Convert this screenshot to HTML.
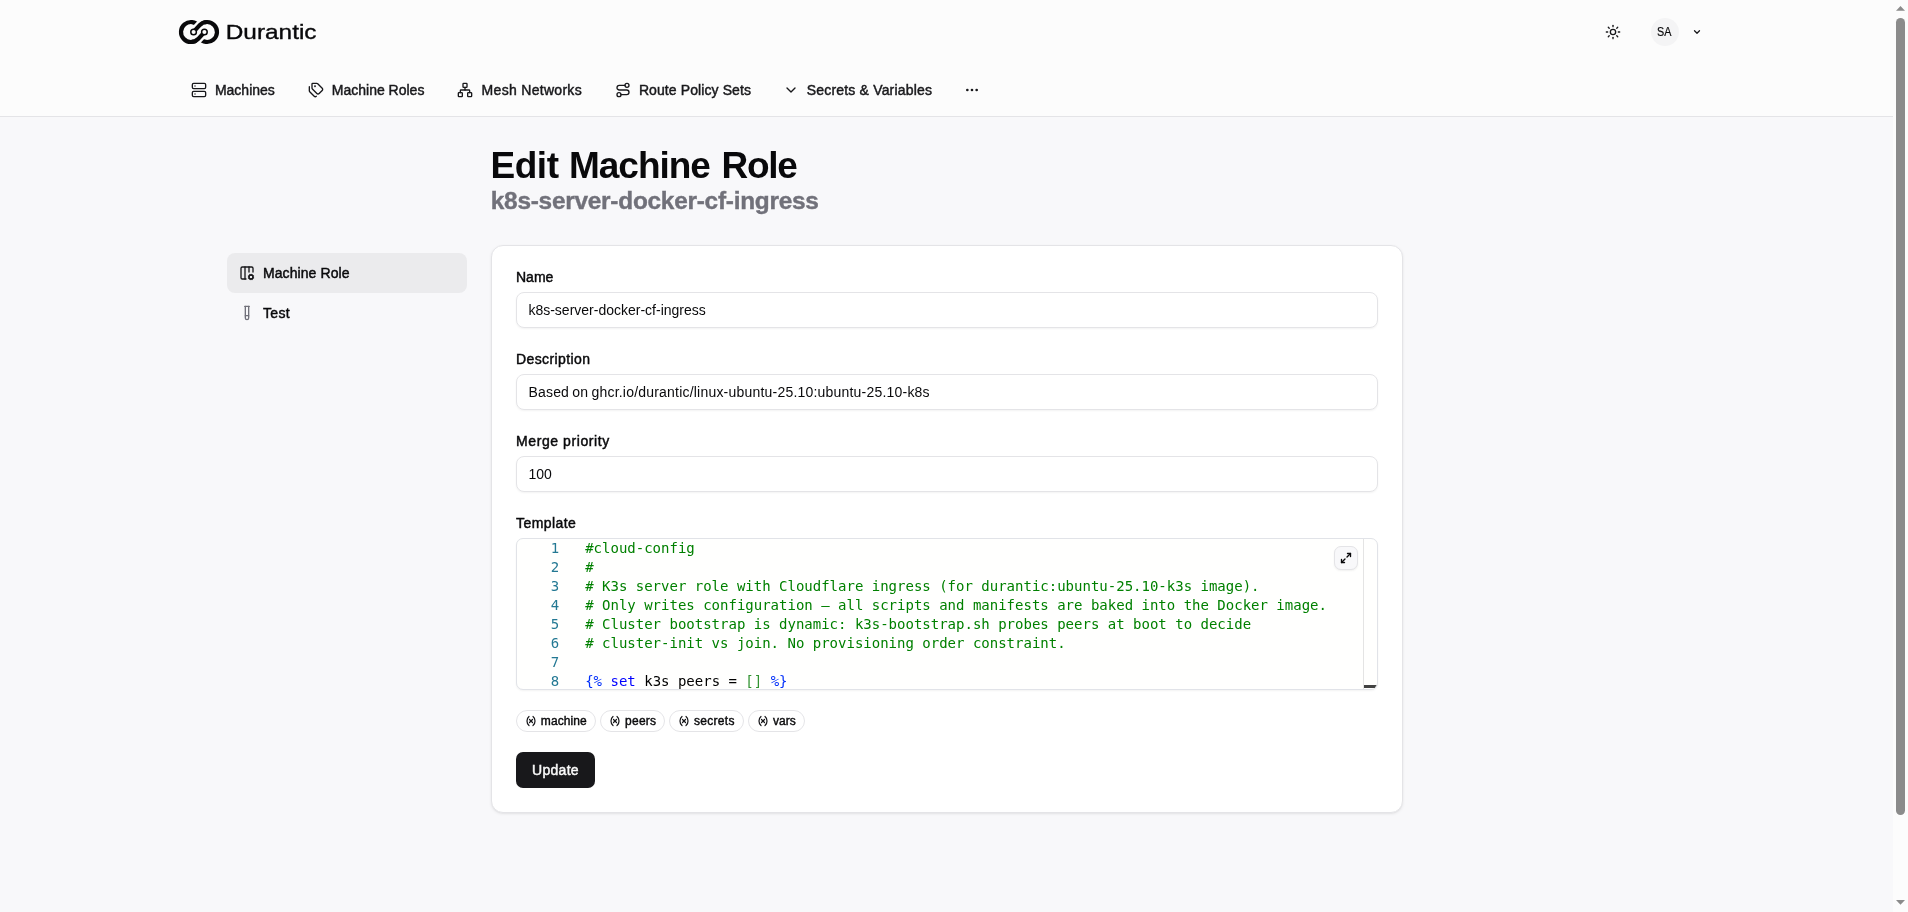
<!DOCTYPE html>
<html lang="en">
<head>
<meta charset="utf-8">
<title>Edit Machine Role - Durantic</title>
<style>
*{box-sizing:border-box;margin:0;padding:0}
html,body{width:1908px;height:912px;overflow:hidden}
body{position:relative;background:#f8f8fa;font-family:"Liberation Sans",sans-serif;color:#09090b;font-size:14px}
#root{position:absolute;left:0;top:0;width:1908px;height:912px;will-change:transform}
.abs{position:absolute}
.med{-webkit-text-stroke:0.45px currentColor}
svg{display:block}
.ico{position:absolute;width:16px;height:16px;fill:none;stroke:#18181b;stroke-width:2;stroke-linecap:round;stroke-linejoin:round}
/* header */
#hdr{position:absolute;left:0;top:0;width:1893px;height:117px;background:#fcfcfc;border-bottom:1px solid #e4e4e7}
#brand{position:absolute;left:227px;top:20px;width:90px;height:24px}
.nav{position:absolute;top:82px;height:16px;line-height:16px;font-size:14px;white-space:nowrap;color:#18181b}
#avatar{position:absolute;left:1651px;top:18px;width:28px;height:28px;border-radius:50%;background:#f4f4f5;text-align:center;line-height:28px;font-size:12.4px;color:#09090b}
#avatar span{display:inline-block;position:relative;left:-.8px;top:.2px;transform:scaleX(.87);-webkit-text-stroke:.2px}
/* scrollbar */
#sb{position:absolute;left:1893px;top:0;width:15px;height:912px;background:#fcfcfc}
#sb .thumb{position:absolute;left:3px;top:18px;width:9px;height:797px;border-radius:4.5px;background:#8b8b8b}
#sb svg{position:absolute;left:0;top:0}
/* title */
#title{position:absolute;left:490.5px;top:145.6px;font-size:37px;letter-spacing:-.76px;line-height:40px;font-weight:bold;white-space:nowrap;color:#09090b}
#title span{position:absolute;top:0}
#subtitle{position:absolute;left:490.8px;top:186.7px;font-size:24.4px;letter-spacing:-.25px;-webkit-text-stroke:.4px #71717a;line-height:28px;font-weight:bold;white-space:nowrap;color:#71717a}
/* sidebar */
.side{position:absolute;left:227px;width:240px;height:40px;border-radius:8px;font-size:14px;line-height:40px;color:#09090b;white-space:nowrap}
.side span{position:absolute;left:36px;top:0}
/* card */
#card{position:absolute;left:491px;top:245px;width:912px;height:568px;background:#fff;border:1px solid #e4e4e7;border-radius:12px;box-shadow:0 1px 3px rgba(0,0,0,.08),0 1px 2px -1px rgba(0,0,0,.08)}
.lbl{position:absolute;left:516px;height:14px;line-height:14px;font-size:14px;white-space:nowrap;color:#09090b}
.inp{position:absolute;left:516px;width:862px;height:36px;border:1px solid #e4e4e7;border-radius:8px;background:#fff;box-shadow:0 1px 2px rgba(0,0,0,.05);font-size:14px;line-height:34px;padding-left:11.4px;white-space:nowrap;color:#09090b}
/* editor */
#ed{position:absolute;left:516px;top:538px;width:862px;height:152px;border:1px solid #e1e3e8;border-radius:7px;background:#fffffe;overflow:hidden;box-shadow:0 1px 2px rgba(0,0,0,.05);font-family:"DejaVu Sans Mono","Liberation Mono",monospace;font-size:14px;line-height:19px}
#ed .ln{position:absolute;left:0;width:42.2px;text-align:right;color:#237893;height:19px;white-space:pre}
#ed .cl{position:absolute;left:68.2px;height:19px;white-space:pre;color:#000}
#ed .c{color:#008000}#ed .k{color:#0000ff}#ed .d{color:#0431fa}#ed .b{color:#319331}
#ruler{position:absolute;left:846px;top:0;width:1px;height:150px;background:#e4e4e4}
#slider{position:absolute;left:847px;top:145.5px;width:13px;height:3px;background:#424242}
#exp{position:absolute;left:817px;top:7px;width:24px;height:24px;border:1px solid #e4e4e7;border-radius:7px;background:#f8f8fa;box-shadow:0 1px 2px rgba(0,0,0,.06)}
/* badges */
.bdg{position:absolute;top:710px;height:22px;border:1px solid #e4e4e7;border-radius:11px;background:#fff;font-size:12px;line-height:20px;white-space:nowrap;color:#09090b}
.bdg span{position:absolute;top:0;-webkit-text-stroke:.4px currentColor}
.bdg svg{position:absolute;left:7.5px;top:4px;width:12px;height:12px;fill:none;stroke:#18181b;stroke-width:2.5;stroke-linecap:round;stroke-linejoin:round}
#upd{position:absolute;left:516px;top:752px;width:79px;height:36px;border-radius:7px;background:#18181b;color:#fafafa;font-size:14px;line-height:36px;text-align:center;letter-spacing:.3px;white-space:nowrap}
</style>
</head>
<body>
<div id="root">
<div id="hdr">
  <svg class="abs" style="left:179px;top:20px;overflow:visible" width="40" height="24" viewBox="0 0 40 24" fill="none" stroke="#09090b" stroke-width="4.2" stroke-linecap="butt">
    <path d="M19.07 19.07 A10 10 0 1 1 19.94 5.92"/>
    <path d="M20.93 4.93 A10 10 0 1 1 20.06 18.08"/>
    <path d="M14.3 12.1 L23.2 2.5" stroke="#fcfcfc" stroke-width="8.8"/>
    <path d="M25.7 11.9 L16.8 21.5" stroke="#fcfcfc" stroke-width="8.8"/>
    <path d="M14.3 12.1 L20.93 4.93 A10 10 0 0 1 28 2"/>
    <path d="M25.7 11.9 L19.07 19.07 A10 10 0 0 1 12 22"/>
    <circle cx="14.6" cy="12" r="2.8" stroke-width="1.5" fill="#fcfcfc"/>
    <circle cx="25.4" cy="12" r="2.8" stroke-width="1.5" fill="#fcfcfc"/>
  </svg>
  <svg id="brand" viewBox="0 0 90 24" style="overflow:visible"><text x="-1.25" y="18.9" font-family="Liberation Sans, sans-serif" font-size="20.4" fill="#09090b" stroke="#09090b" stroke-width="0.35" textLength="90.8" lengthAdjust="spacingAndGlyphs">Durantic</text></svg>

  <svg class="ico" style="left:191px;top:82px" viewBox="0 0 24 24"><rect width="20" height="8" x="2" y="2" rx="2" ry="2"/><rect width="20" height="8" x="2" y="14" rx="2" ry="2"/><line x1="6" x2="6.01" y1="6" y2="6"/><line x1="6" x2="6.01" y1="18" y2="18"/></svg>
  <div class="nav med" style="left:214.9px">Machines</div>

  <svg class="ico" style="left:307.8px;top:82px" viewBox="0 0 24 24"><path d="M13.172 2a2 2 0 0 1 1.414.586l6.71 6.71a2.4 2.4 0 0 1 0 3.408l-4.592 4.592a2.4 2.4 0 0 1-3.408 0l-6.71-6.71A2 2 0 0 1 6 9.172V3a1 1 0 0 1 1-1z"/><path d="M2 7v6.172a2 2 0 0 0 .586 1.414l6.71 6.71a2.4 2.4 0 0 0 3.191.193"/><circle cx="10.5" cy="6.5" r=".5" fill="#18181b"/></svg>
  <div class="nav med" style="left:331.8px">Machine Roles</div>

  <svg class="ico" style="left:457px;top:82px" viewBox="0 0 24 24"><rect x="16" y="16" width="6" height="6" rx="1"/><rect x="2" y="16" width="6" height="6" rx="1"/><rect x="9" y="2" width="6" height="6" rx="1"/><path d="M5 16v-3a1 1 0 0 1 1-1h12a1 1 0 0 1 1 1v3"/><path d="M12 12V8"/></svg>
  <div class="nav med" style="left:481.6px;letter-spacing:.3px">Mesh Networks</div>

  <svg class="ico" style="left:615px;top:82px" viewBox="0 0 24 24"><circle cx="6" cy="19" r="3"/><path d="M9 19h8.5a3.5 3.5 0 0 0 0-7h-11a3.5 3.5 0 0 1 0-7H15"/><circle cx="18" cy="5" r="3"/></svg>
  <div class="nav med" style="left:638.9px;letter-spacing:.1px">Route Policy Sets</div>

  <svg class="ico" style="left:783px;top:82px" viewBox="0 0 24 24"><path d="m6 9 6 6 6-6"/></svg>
  <div class="nav med" style="left:806.8px;letter-spacing:.18px">Secrets &amp; Variables</div>

  <svg class="ico" style="left:964px;top:82px" viewBox="0 0 24 24"><circle cx="12" cy="12" r="1"/><circle cx="19" cy="12" r="1"/><circle cx="5" cy="12" r="1"/></svg>

  <svg class="ico" style="left:1605px;top:24px" viewBox="0 0 24 24"><circle cx="12" cy="12" r="4"/><path d="M12 2v2"/><path d="M12 20v2"/><path d="m4.93 4.93 1.41 1.41"/><path d="m17.66 17.66 1.41 1.41"/><path d="M2 12h2"/><path d="M20 12h2"/><path d="m6.34 17.66-1.41 1.41"/><path d="m19.07 4.93-1.41 1.41"/></svg>
  <div id="avatar" class="med"><span>SA</span></div>
  <svg class="ico" style="left:1692px;top:27px;width:10px;height:10px;stroke-width:3" viewBox="0 0 24 24"><path d="m6 9 6 6 6-6"/></svg>
</div>

<div id="sb"><svg width="15" height="912" viewBox="0 0 15 912"><polygon points="3,10.7 12,10.7 7.5,5.9" fill="#8b8b8b"/><polygon points="3,900 12,900 7.5,904.8" fill="#8b8b8b"/></svg><div class="thumb"></div></div>

<div id="title"><span style="left:0;letter-spacing:-.46px">Edit</span> <span style="left:78.6px;letter-spacing:-1.06px">Machine</span> <span style="left:231px;letter-spacing:-1.3px">Role</span></div>
<div id="subtitle">k8s-server-docker-cf-ingress</div>

<div class="side med" style="top:253px;background:#ebebed">
  <svg class="ico" style="left:12px;top:12px" viewBox="0 0 24 24"><path d="M10.5 21H5a2 2 0 0 1-2-2V5a2 2 0 0 1 2-2h14a2 2 0 0 1 2 2v5.5"/><path d="M15 3v7.5"/><path d="M9 3v18"/><circle cx="18" cy="18" r="3"/><path d="m14.3 19.6 1-.4"/><path d="m15.2 16.9-.9-.3"/><path d="m16.6 21.7.3-.9"/><path d="m16.8 15.3-.4-1"/><path d="m19.1 15.2.3-.9"/><path d="m19.6 21.7-.4-1"/><path d="m20.7 16.8 1-.4"/><path d="m21.7 19.4-.9-.3"/></svg>
  <span style="letter-spacing:.08px">Machine Role</span>
</div>
<div class="side med" style="top:293px">
  <svg class="ico" style="left:12px;top:12px;stroke:#71717a" viewBox="0 0 24 24"><path d="M14.5 2v17.5c0 1.4-1.1 2.5-2.5 2.5c-1.4 0-2.5-1.1-2.5-2.5V2"/><path d="M8.5 2h7"/><path d="M14.5 16h-5"/></svg>
  <span style="letter-spacing:.3px">Test</span>
</div>

<div id="card"></div>
<div class="lbl med" style="top:270px">Name</div>
<div class="inp" style="top:292px">k8s-server-docker-cf-ingress</div>
<div class="lbl med" style="top:352px;letter-spacing:.4px">Description</div>
<div class="inp" style="top:374px;letter-spacing:.205px;word-spacing:-.9px">Based on ghcr.io/durantic/linux-ubuntu-25.10:ubuntu-25.10-k8s</div>
<div class="lbl med" style="top:434px;letter-spacing:.59px">Merge priority</div>
<div class="inp" style="top:456px">100</div>
<div class="lbl med" style="top:516px;letter-spacing:.44px">Template</div>

<div id="ed">
  <div class="ln" style="top:0">1</div><div class="cl c" style="top:0">#cloud-config</div>
  <div class="ln" style="top:19px">2</div><div class="cl c" style="top:19px">#</div>
  <div class="ln" style="top:38px">3</div><div class="cl c" style="top:38px"># K3s server role with Cloudflare ingress (for durantic:ubuntu-25.10-k3s image).</div>
  <div class="ln" style="top:57px">4</div><div class="cl c" style="top:57px"># Only writes configuration — all scripts and manifests are baked into the Docker image.</div>
  <div class="ln" style="top:76px">5</div><div class="cl c" style="top:76px"># Cluster bootstrap is dynamic: k3s-bootstrap.sh probes peers at boot to decide</div>
  <div class="ln" style="top:95px">6</div><div class="cl c" style="top:95px"># cluster-init vs join. No provisioning order constraint.</div>
  <div class="ln" style="top:114px">7</div><div class="cl" style="top:114px"></div>
  <div class="ln" style="top:133px">8</div><div class="cl" style="top:133px"><span class="d">{%</span> <span class="k">set</span> k3s_peers = <span class="b">[]</span> <span class="d">%}</span></div>
  <div id="ruler"></div>
  <div id="slider"></div>
  <div id="exp"><svg style="position:absolute;left:5px;top:5px;width:12px;height:12px;fill:none;stroke:#09090b;stroke-width:2.7;stroke-linecap:round;stroke-linejoin:round" viewBox="0 0 24 24"><polyline points="15 3 21 3 21 9"/><polyline points="9 21 3 21 3 15"/><line x1="21" x2="14" y1="3" y2="10"/><line x1="3" x2="10" y1="21" y2="14"/></svg></div>
</div>

<div class="bdg med" style="left:516px;width:79.5px"><svg viewBox="0 0 24 24"><path d="M8 21s-4-3-4-9 4-9 4-9"/><path d="M16 3s4 3 4 9-4 9-4 9"/><line x1="15" x2="9" y1="9" y2="15"/><line x1="9" x2="15" y1="9" y2="15"/></svg><span style="left:23.8px;letter-spacing:.1px">machine</span></div>
<div class="bdg med" style="left:600.3px;width:64.4px"><svg viewBox="0 0 24 24"><path d="M8 21s-4-3-4-9 4-9 4-9"/><path d="M16 3s4 3 4 9-4 9-4 9"/><line x1="15" x2="9" y1="9" y2="15"/><line x1="9" x2="15" y1="9" y2="15"/></svg><span style="left:23.8px;letter-spacing:.25px">peers</span></div>
<div class="bdg med" style="left:669.2px;width:74.8px"><svg viewBox="0 0 24 24"><path d="M8 21s-4-3-4-9 4-9 4-9"/><path d="M16 3s4 3 4 9-4 9-4 9"/><line x1="15" x2="9" y1="9" y2="15"/><line x1="9" x2="15" y1="9" y2="15"/></svg><span style="left:23.8px;letter-spacing:.3px">secrets</span></div>
<div class="bdg med" style="left:748.3px;width:56.4px"><svg viewBox="0 0 24 24"><path d="M8 21s-4-3-4-9 4-9 4-9"/><path d="M16 3s4 3 4 9-4 9-4 9"/><line x1="15" x2="9" y1="9" y2="15"/><line x1="9" x2="15" y1="9" y2="15"/></svg><span style="left:23.8px">vars</span></div>

<div id="upd" class="med">Update</div>
</div>
</body>
</html>
